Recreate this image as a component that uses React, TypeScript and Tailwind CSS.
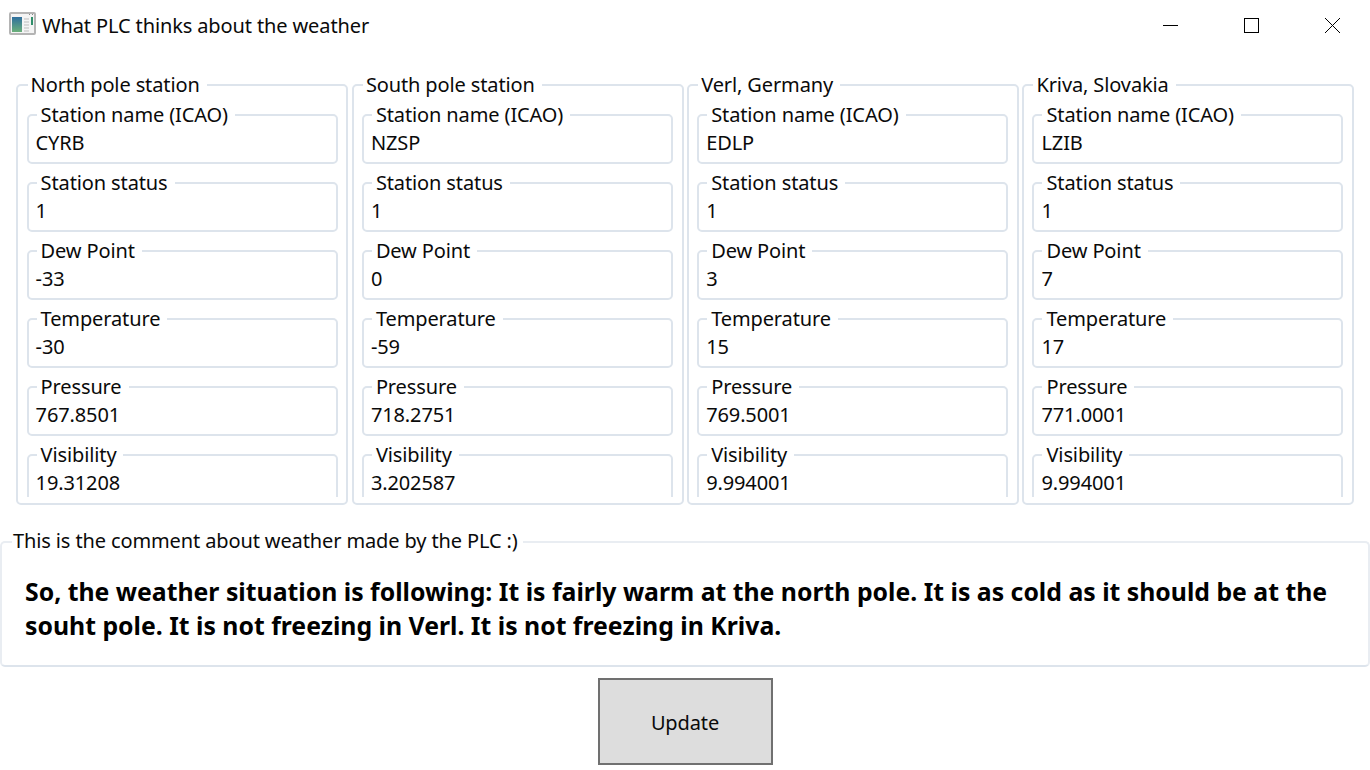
import React from 'react';

interface Station {
  title: string;
  values: string[];
}

const LABELS = ['Station name (ICAO)', 'Station status', 'Dew Point', 'Temperature', 'Pressure', 'Visibility'];

const STATIONS: Station[] = [
  { title: 'North pole station', values: ['CYRB', '1', '-33', '-30', '767.8501', '19.31208'] },
  { title: 'South pole station', values: ['NZSP', '1', '0', '-59', '718.2751', '3.202587'] },
  { title: 'Verl, Germany', values: ['EDLP', '1', '3', '15', '769.5001', '9.994001'] },
  { title: 'Kriva, Slovakia', values: ['LZIB', '1', '7', '17', '771.0001', '9.994001'] },
];

function AppIcon() {
  return (
    <svg width="27" height="27" viewBox="0 0 27 27" className="shrink-0">
      <defs>
        <linearGradient id="pane" x1="0" y1="0" x2="0" y2="1">
          <stop offset="0" stopColor="#2f6f9e" />
          <stop offset="1" stopColor="#6bb07a" />
        </linearGradient>
      </defs>
      <rect x="1" y="1" width="25" height="21" rx="1" fill="#f4f4f4" stroke="#b4b4b4" strokeWidth="2" />
      <path d="M20 2.5h1M23 2.5h1" stroke="#8a8a8a" />
      <rect x="3" y="5" width="10" height="15" fill="url(#pane)" />
      <path d="M15 7h5M15 10h5M15 13h5M15 16h5M15 19h5" stroke="#bdbdbd" />
      <rect x="22" y="5" width="2" height="8" fill="#2f8f6a" />
    </svg>
  );
}

function Field({ label, value }: { label: string; value: string }) {
  return (
    <fieldset className="h-[62px] shrink-0 rounded-[5px] border-2 border-[#dde4ec] pl-[7px] pr-2">
      <legend className="ml-[1px] h-[26px] pl-[4px] pr-[7px] leading-[26px]">{label}</legend>
      <div className="mt-[1px] h-[27px] leading-[27px]">{value}</div>
    </fieldset>
  );
}

export default function App() {
  return (
    <div
      className="flex h-[770px] w-[1370px] flex-col overflow-hidden bg-white text-[20px] tracking-[-0.12px] text-[#0a0a0a]"
      style={{ fontFamily: '"Noto Sans", sans-serif' }}
    >
      {/* Title bar */}
      <div className="flex h-[50px] items-center pl-[9px] pr-[30px]">
        <AppIcon />
        <span className="ml-[6px] mt-[2px]">What PLC thinks about the weather</span>
        <div className="ml-auto flex items-center gap-[66px]">
          <svg width="15" height="15" viewBox="0 0 15 15">
            <path d="M0 7.5h15" stroke="#000" />
          </svg>
          <svg width="15" height="15" viewBox="0 0 15 15">
            <rect x="0.5" y="0.5" width="14" height="14" fill="none" stroke="#000" />
          </svg>
          <svg width="15" height="15" viewBox="0 0 15 15">
            <path d="M0 0l15 15M15 0L0 15" stroke="#000" />
          </svg>
        </div>
      </div>

      {/* Stations */}
      <div className="mt-[22px] flex gap-[3.3px] pl-[16.4px]">
        {STATIONS.map((s) => (
          <fieldset
            key={s.title}
            className="h-[433px] w-[332px] rounded-[5px] border-2 border-[#dde4ec] pl-[8.2px] pr-[8.8px]"
          >
            <legend className="ml-[1px] h-[26px] pl-[3px] pr-[7px] leading-[26px]">{s.title}</legend>
            <div className="flex h-[399px] flex-col gap-[6px] overflow-hidden pt-1">
              {LABELS.map((label, i) => (
                <Field key={label} label={label} value={s.values[i]} />
              ))}
            </div>
          </fieldset>
        ))}
      </div>

      {/* PLC comment */}
      <fieldset className="mt-[23px] h-[139px] rounded-[5px] border-2 border-[#e9edf2] border-b-[#dde4ec]">
        <legend className="ml-[10px] h-[28px] pl-[1px] pr-[5px] leading-[26px]">
          This is the comment about weather made by the PLC :)
        </legend>
        <p className="mt-[18px] pl-[23px] pr-6 text-[24.8px] font-bold leading-[34px] tracking-normal text-black">
          So, the weather situation is following: It is fairly warm at the north pole. It is as cold as it should be at
          the souht pole. It is not freezing in Verl. It is not freezing in Kriva.
        </p>
      </fieldset>

      <div className="mt-[11px] flex justify-center">
        <button className="h-[87px] w-[175px] border-2 border-[#707070] bg-[#dddddd] pt-[2px]">Update</button>
      </div>
    </div>
  );
}
